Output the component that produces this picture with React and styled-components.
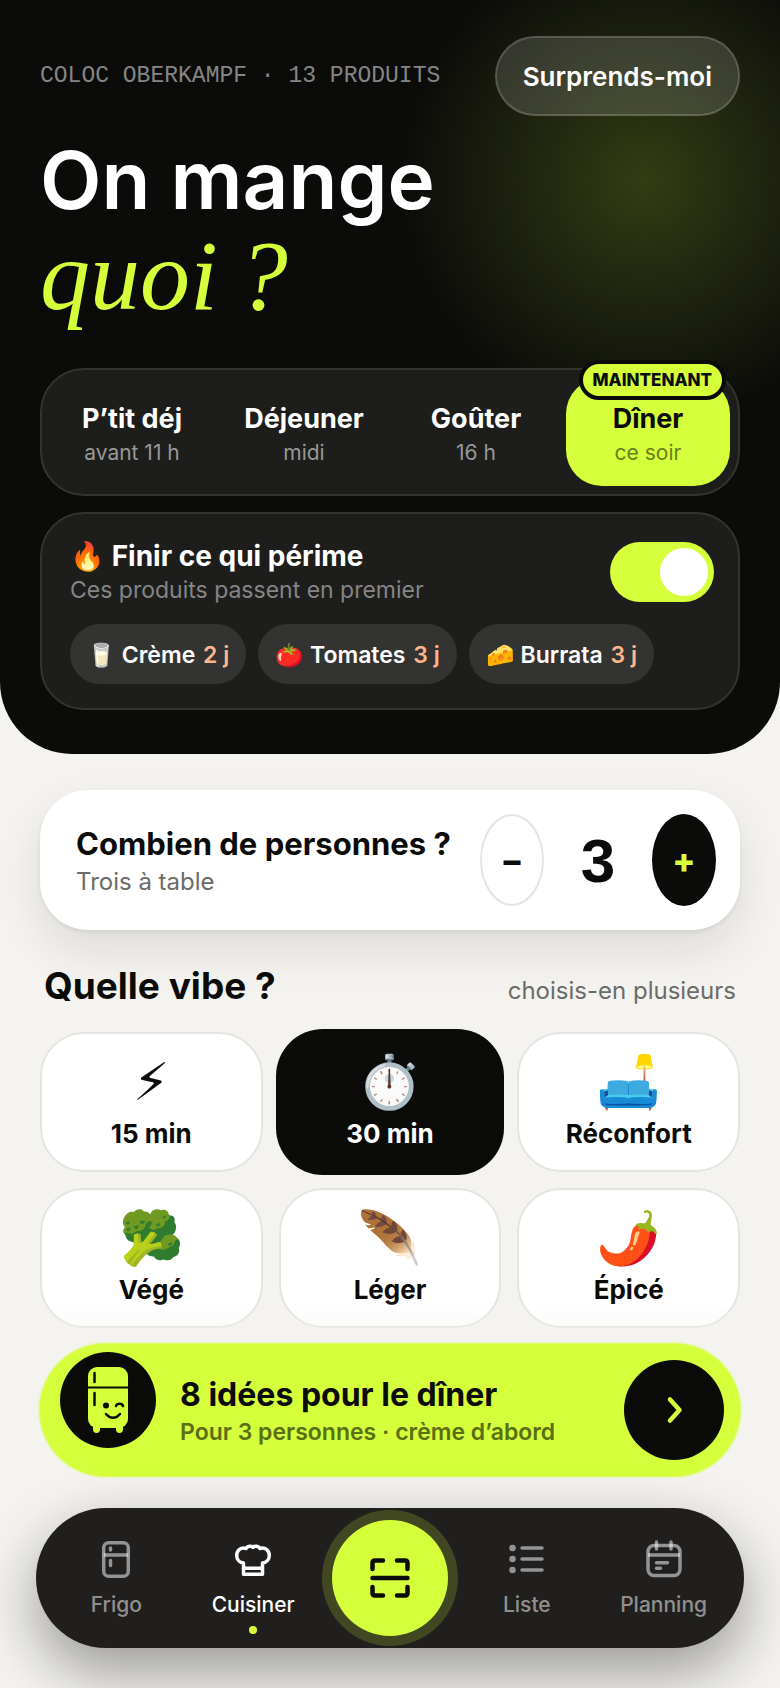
import { useState } from 'react'
import styled, { createGlobalStyle, css } from 'styled-components'

const ink = '#0b0c0a'
const lime = '#d4ff3a'
const paper = '#f4f3f0'

const GlobalStyle = createGlobalStyle`
  * { box-sizing: border-box; }
  body {
    margin: 0;
    background: ${paper};
    color: ${ink};
    font-family: Inter, "Liberation Sans", sans-serif;
  }
  button, input { font-family: inherit; color: inherit; }
  button { border: 0; padding: 0; background: none; cursor: pointer; }
  h1, h2, p { margin: 0; }
`

const Page = styled.div`
  display: flex;
  flex-direction: column;
`

const Hero = styled.header`
  display: flex;
  flex-direction: column;
  gap: 16px;
  padding: 36px 40px 44px;
  border-radius: 0 0 72px 72px;
  color: #fff;
  background: radial-gradient(circle 320px at calc(100% - 136px) 180px, rgba(212, 255, 58, 0.2), transparent 76%), ${ink};
`

const HeroTop = styled.div`
  display: flex;
  align-items: center;
  justify-content: space-between;
`

const Eyebrow = styled.p`
  font-family: "Liberation Mono", monospace;
  font-size: 23px;
  color: #858585;
`

const SurpriseButton = styled.button`
  height: 80px;
  padding: 0 26px;
  border: 2px solid rgba(255, 255, 255, 0.16);
  border-radius: 40px;
  background: rgba(255, 255, 255, 0.14);
  font-size: 26px;
  font-weight: 600;
`

const Title = styled.h1`
  padding-bottom: 28px;
  font-size: 80px;
  font-weight: 600;
  line-height: 96px;

  em {
    display: block;
    color: ${lime};
    font-family: "Liberation Serif", serif;
    font-size: 100px;
    font-weight: 400;
  }
`

const Panel = styled.section`
  border: 2px solid #333331;
  border-radius: 44px;
  background: #1d1d1c;
`

const MealTabs = styled(Panel)`
  display: grid;
  grid-template-columns: repeat(4, 1fr);
  gap: 8px;
  padding: 8px;
`

const MealTab = styled.button`
  position: relative;
  display: flex;
  flex-direction: column;
  align-items: center;
  justify-content: center;
  height: 108px;
  border-radius: 36px;
  padding-top: 6px;
  color: ${({ $active }) => ($active ? ink : '#fff')};
  background: ${({ $active }) => ($active ? lime : 'transparent')};

  strong { font-size: 27px; font-weight: 700; line-height: 36px; }
  small { font-size: 21px; line-height: 32px; color: ${({ $active }) => ($active ? '#6a7f1d' : '#989897')}; }
`

const NowBadge = styled.span`
  position: absolute;
  top: -18px;
  right: 4px;
  padding: 0 10px;
  border: 4px solid ${ink};
  border-radius: 20px;
  background: ${lime};
  font-size: 17px;
  font-weight: 800;
  line-height: 32px;
`

const ExpiringPanel = styled(Panel)`
  display: flex;
  flex-direction: column;
  gap: 18px;
  padding: 24px 24px 24px 28px;
`

const SwitchRow = styled.label`
  display: flex;
  align-items: center;
  justify-content: space-between;

  strong { display: block; font-size: 28px; font-weight: 700; line-height: 36px; }
  small { display: block; font-size: 23px; line-height: 32px; color: #858585; }
`

const Switch = styled.input`
  appearance: none;
  display: flex;
  align-items: center;
  width: 104px;
  height: 60px;
  margin: 0;
  padding: 0 6px;
  border-radius: 30px;
  background: #444442;
  cursor: pointer;

  &::before {
    content: "";
    width: 48px;
    height: 48px;
    border-radius: 50%;
    background: #fff;
  }
  &:checked { justify-content: flex-end; background: ${lime}; }
`

const Chips = styled.div`
  display: flex;
  gap: 12px;
`

const Chip = styled.span`
  height: 60px;
  padding: 0 17px;
  border-radius: 30px;
  background: #333331;
  font-size: 23px;
  font-weight: 600;
  line-height: 62px;
  white-space: nowrap;

  b { margin-left: 2px; font-weight: 600; color: #ffb48c; }
`

const Content = styled.main`
  display: flex;
  flex-direction: column;
  padding: 36px 40px 0;
`

const PeopleCard = styled.section`
  display: flex;
  align-items: center;
  height: 140px;
  padding: 0 24px 0 36px;
  border-radius: 48px;
  background: #fff;
  box-shadow: 0 2px 4px rgba(20, 20, 10, 0.08), 0 20px 48px rgba(20, 20, 10, 0.1);
`

const PeopleText = styled.div`
  flex: 1;
  padding-top: 4px;
  white-space: nowrap;

  h2 { font-size: 31px; font-weight: 700; line-height: 40px; }
  p { font-size: 24px; line-height: 36px; color: #6b6b68; }
`

const StepButton = styled.button`
  width: 64px;
  height: 92px;
  border: 2px solid ${({ $dark }) => ($dark ? ink : '#e4e4e1')};
  border-radius: 50%;
  background: ${({ $dark }) => ($dark ? ink : '#fff')};
  color: ${({ $dark }) => ($dark ? lime : ink)};
  font-size: 34px;
  font-weight: 800;
`

const PeopleCount = styled.output`
  width: 108px;
  font-family: "Liberation Sans", sans-serif;
  font-size: 62px;
  font-weight: 700;
  text-align: center;
`

const SectionHead = styled.div`
  display: flex;
  align-items: baseline;
  justify-content: space-between;
  padding: 32px 4px 22px;

  h2 { font-size: 37px; font-weight: 700; line-height: 48px; }
  p { font-size: 24px; color: #6b6b68; }
`

const VibeGrid = styled.div`
  display: grid;
  grid-template-columns: repeat(3, 1fr);
  gap: 16px;
`

const VibeButton = styled.button`
  display: flex;
  flex-direction: column;
  align-items: center;
  justify-content: center;
  height: 140px;
  border: 2px solid #e4e4e0;
  border-radius: 44px;
  background: #fff;
  font-size: 26px;
  font-weight: 700;
  line-height: 36px;

  span { margin-bottom: 4px; font-size: 52px; font-weight: 400; line-height: 60px; }

  ${({ $active }) => $active && css`
    border-color: ${ink};
    background: ${ink};
    color: #fff;
    box-shadow: 0 0 0 3px ${ink};
  `}
`

const Dock = styled.div`
  position: relative;
  display: flex;
  flex-direction: column;
  gap: 32px;
  margin-top: -28px;
  padding: 44px 36px 40px;
  background: linear-gradient(rgba(244, 243, 240, 0), ${paper} 80px);
`

const IdeasButton = styled.button`
  display: flex;
  align-items: center;
  margin: 0 4px;
  height: 132px;
  padding: 0 16px 0 20px;
  border-radius: 66px;
  background: ${lime};
  box-shadow: 0 0 2px 1px ${lime};
  text-align: left;
`

const Mascot = styled.span`
  display: flex;
  align-items: center;
  justify-content: center;
  width: 96px;
  height: 96px;
  margin-bottom: 20px;
  border-radius: 50%;
  background: ${ink};
`

const IdeasText = styled.span`
  flex: 1;
  padding: 4px 0 0 24px;

  strong { display: block; font-size: 32px; font-weight: 700; line-height: 40px; }
  small { display: block; font-size: 23px; font-weight: 600; line-height: 34px; color: #5a6f14; }
`

const GoCircle = styled.span`
  display: flex;
  align-items: center;
  justify-content: center;
  width: 100px;
  height: 100px;
  border-radius: 50%;
  background: ${ink};
  color: ${lime};
`

const TabBar = styled.nav`
  display: grid;
  grid-template-columns: repeat(5, 1fr);
  align-items: center;
  justify-items: center;
  height: 140px;
  padding: 0 12px;
  border-radius: 70px;
  background: #201f1e;
  box-shadow: 0 24px 60px rgba(20, 18, 16, 0.4);
`

const TabLink = styled.a`
  position: relative;
  display: flex;
  flex-direction: column;
  align-items: center;
  gap: 8px;
  padding-top: 2px;
  color: ${({ $active }) => ($active ? '#fff' : 'rgba(255, 255, 255, 0.52)')};
  font-size: 21px;
  font-weight: 500;
  line-height: 32px;
  text-decoration: none;

  ${({ $active }) => $active && css`
    &::after {
      content: "";
      position: absolute;
      bottom: -13px;
      width: 8px;
      height: 8px;
      border-radius: 50%;
      background: ${lime};
    }
  `}
`

const ScanButton = styled.button`
  display: flex;
  align-items: center;
  justify-content: center;
  width: 116px;
  height: 116px;
  border-radius: 50%;
  background: ${lime};
  box-shadow: 0 0 0 10px #414721;
`

const Icon = ({ width = 3.5, children }) => (
  <svg width="44" height="44" viewBox="0 0 44 44" fill="none" stroke="currentColor" strokeWidth={width} strokeLinecap="round" strokeLinejoin="round" aria-hidden="true">
    {children}
  </svg>
)

const FridgeIcon = () => (
  <Icon>
    <rect x="9.7" y="5.7" width="24.600" height="33.600" rx="5" />
    <path d="M9.700 18h24.600" strokeLinecap="butt" />
    <path d="M16.500 11v2M16.500 23.500v5" />
  </Icon>
)

const ChefIcon = () => (
  <Icon>
    <path d="M12.500 37.300V26C8.500 25.500 5.700 22.500 5.700 18.500C5.700 13.500 10 9.800 15 11.500C16.500 9 20 8.600 22 10.300C24 8.600 27.500 9 29 11.500C34 9.800 38.300 13.500 38.300 18.500C38.300 22.500 35.500 25.500 31.500 26V37.300ZM12.500 31.300H31.500" />
  </Icon>
)

const ListIcon = () => (
  <Icon>
    <path d="M17 11h20M17 22h20M17 33h20" />
    <path d="M7.500 11h.01M7.500 22h.01M7.500 33h.01" strokeWidth="6.500" />
  </Icon>
)

const CalendarIcon = () => (
  <Icon>
    <rect x="6" y="8.500" width="32" height="30" rx="6" />
    <path d="M6 18h32" strokeLinecap="butt" />
    <path d="M14.500 5v7M29 5v7M14.500 25.700h11M14.500 31.300h4" />
  </Icon>
)

const MascotIcon = () => (
  <svg width="44" height="68" viewBox="0 0 44 68" aria-hidden="true">
    <rect x="2" y="1" width="40" height="61" rx="9" fill={lime} />
    <path d="M7 61h7v2q0 4-3.500 4T7 63zM30 61h7v2q0 4-3.500 4T30 63z" fill={lime} />
    <path d="M2 21.500h40" stroke={ink} strokeWidth="2" />
    <path d="M8.500 7v9M8.500 27v12" stroke={ink} strokeWidth="2.500" strokeLinecap="round" />
    <circle cx="20" cy="39.500" r="3" fill={ink} />
    <path d="M30 40c1-3 6-3 7 0M20 48c4 5 10 5 14 0" fill="none" stroke={ink} strokeWidth="2.500" strokeLinecap="round" />
  </svg>
)

const meals = [
  { name: 'P’tit déj', time: 'avant 11 h' },
  { name: 'Déjeuner', time: 'midi' },
  { name: 'Goûter', time: '16 h' },
  { name: 'Dîner', time: 'ce soir', now: true },
]

const expiring = [
  { emoji: '🥛', name: 'Crème', days: 2 },
  { emoji: '🍅', name: 'Tomates', days: 3 },
  { emoji: '🧀', name: 'Burrata', days: 3 },
]

const vibes = [
  { emoji: '⚡︎', name: '15 min' },
  { emoji: '⏱️', name: '30 min' },
  { emoji: '🛋️', name: 'Réconfort' },
  { emoji: '🥦', name: 'Végé' },
  { emoji: '🪶', name: 'Léger' },
  { emoji: '🌶️', name: 'Épicé' },
]

const words = ['Une', 'Deux', 'Trois', 'Quatre', 'Cinq', 'Six']

export default function App() {
  const [meal, setMeal] = useState('Dîner')
  const [people, setPeople] = useState(3)
  const [picked, setPicked] = useState(['30 min'])

  const toggleVibe = (name) => {
    setPicked(picked.includes(name) ? picked.filter((v) => v !== name) : [...picked, name])
  }

  return (
    <Page>
      <GlobalStyle />
      <Hero>
        <HeroTop>
          <Eyebrow>COLOC OBERKAMPF · 13 PRODUITS</Eyebrow>
          <SurpriseButton>Surprends-moi</SurpriseButton>
        </HeroTop>
        <Title>On mange <em>quoi&#8239;?</em></Title>
        <MealTabs>
          {meals.map((m) => (
            <MealTab key={m.name} $active={m.name === meal} onClick={() => setMeal(m.name)}>
              {m.now && <NowBadge>MAINTENANT</NowBadge>}
              <strong>{m.name}</strong>
              <small>{m.time}</small>
            </MealTab>
          ))}
        </MealTabs>
        <ExpiringPanel>
          <SwitchRow>
            <span>
              <strong>🔥 Finir ce qui périme</strong>
              <small>Ces produits passent en premier</small>
            </span>
            <Switch type="checkbox" defaultChecked />
          </SwitchRow>
          <Chips>
            {expiring.map((e) => (
              <Chip key={e.name}>{e.emoji} {e.name} <b>{e.days} j</b></Chip>
            ))}
          </Chips>
        </ExpiringPanel>
      </Hero>

      <Content>
        <PeopleCard>
          <PeopleText>
            <h2>Combien de personnes ?</h2>
            <p>{words[people - 1]} à table</p>
          </PeopleText>
          <StepButton aria-label="Moins" onClick={() => setPeople(Math.max(1, people - 1))}>–</StepButton>
          <PeopleCount>{people}</PeopleCount>
          <StepButton $dark aria-label="Plus" onClick={() => setPeople(Math.min(6, people + 1))}>+</StepButton>
        </PeopleCard>

        <SectionHead>
          <h2>Quelle vibe ?</h2>
          <p>choisis-en plusieurs</p>
        </SectionHead>
        <VibeGrid>
          {vibes.map((v) => (
            <VibeButton key={v.name} $active={picked.includes(v.name)} onClick={() => toggleVibe(v.name)}>
              <span>{v.emoji}</span>
              {v.name}
            </VibeButton>
          ))}
        </VibeGrid>
      </Content>

      <Dock>
        <IdeasButton>
          <Mascot><MascotIcon /></Mascot>
          <IdeasText>
            <strong>8 idées pour le dîner</strong>
            <small>Pour {people} personnes · crème d’abord</small>
          </IdeasText>
          <GoCircle>
            <Icon width={4.5}><path d="M18 11.500l9.500 10.500-9.500 10.500" /></Icon>
          </GoCircle>
        </IdeasButton>
        <TabBar>
          <TabLink href="#frigo"><FridgeIcon />Frigo</TabLink>
          <TabLink href="#cuisiner" $active><ChefIcon />Cuisiner</TabLink>
          <ScanButton aria-label="Scanner">
            <Icon width={4.5}>
              <path d="M4.500 13V7q0-2.500 2.500-2.500h8M29 4.500h8q2.500 0 2.500 2.500v6M39.500 31v6q0 2.500-2.500 2.500h-8M15 39.500H7q-2.500 0-2.500-2.500v-6M4.500 22h35" />
            </Icon>
          </ScanButton>
          <TabLink href="#liste"><ListIcon />Liste</TabLink>
          <TabLink href="#planning"><CalendarIcon />Planning</TabLink>
        </TabBar>
      </Dock>
    </Page>
  )
}
